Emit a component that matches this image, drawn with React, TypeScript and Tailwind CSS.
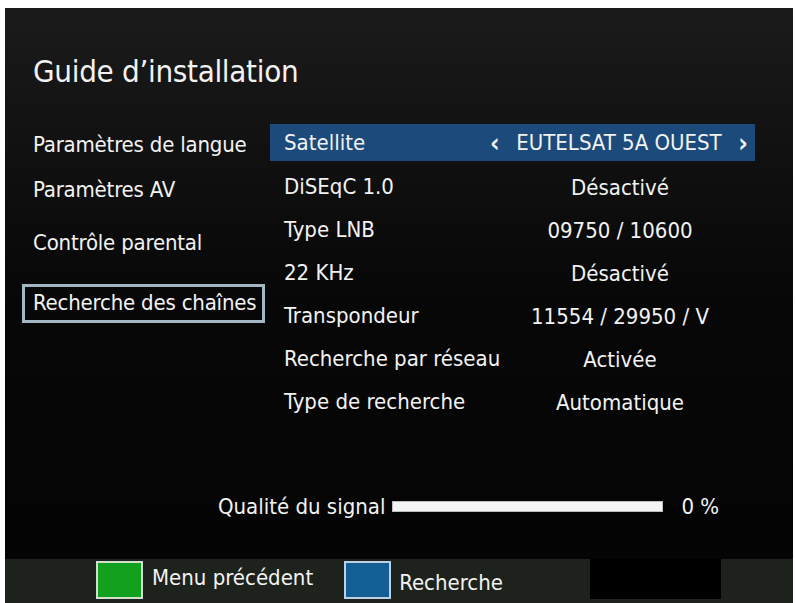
import React from 'react';

const FONT = { fontFamily: '"Liberation Sans Narrow", "DejaVu Sans Condensed", "Roboto", sans-serif' };

const menu = [
  { label: 'Paramètres de langue', cls: 'h-[37px] pt-[4px]' },
  { label: 'Paramètres AV', cls: 'mt-[8px] h-[40px]' },
  { label: 'Contrôle parental', cls: 'mt-[13px] h-[40px]' },
];

const rows = [
  { label: 'DiSEqC 1.0', value: 'Désactivé' },
  { label: 'Type LNB', value: '09750 / 10600' },
  { label: '22 KHz', value: 'Désactivé' },
  { label: 'Transpondeur', value: '11554 / 29950 / V' },
  { label: 'Recherche par réseau', value: 'Activée' },
  { label: 'Type de recherche', value: 'Automatique' },
];

const App: React.FC = () => {
  return (
    <div className="w-[795px] h-[603px] bg-white pt-[8px] pl-[5px] pr-[2px] overflow-hidden" style={FONT}>
      <div className="h-[595px] flex flex-col bg-gradient-to-b from-[#1b1b1b] via-[#070707] to-[#040404] text-[#f2f2f2]">
        {/* Title */}
        <div className="h-[117px] pt-[43px] pl-[28px]">
          <h1 className="text-[31px] leading-[40px] tracking-[-0.3px]">Guide d’installation</h1>
        </div>

        {/* Body */}
        <div className="flex h-[330px]">
          {/* Left menu */}
          <div className="w-[265px] pl-[17px] flex flex-col text-[22px] tracking-[-0.2px] whitespace-nowrap">
            {menu.map((m) => (
              <div key={m.label} className={`${m.cls} flex items-center pl-[11px]`}>
                {m.label}
              </div>
            ))}
            <div className="mt-[22px] h-[39px] w-[243px] border-[3px] border-[#a3b7c3] flex items-center pl-[8px] pb-[3px]">
              Recherche des chaînes
            </div>
          </div>

          {/* Settings */}
          <div className="w-[485px] flex flex-col text-[22px] whitespace-nowrap">
            <div className="h-[37px] bg-[#1b4a7b] flex items-center">
              <div className="w-[215px] pl-[14px]">Satellite</div>
              <div className="flex-1 flex items-center justify-between pl-[5px] pr-[7px]">
                <span className="text-[26px] leading-none font-bold">‹</span>
                <span>EUTELSAT 5A OUEST</span>
                <span className="text-[26px] leading-none font-bold">›</span>
              </div>
            </div>
            <div className="h-[5px]" />
            {rows.map((r) => (
              <div key={r.label} className="h-[43px] flex items-center">
                <div className="w-[215px] pl-[14px] pb-[2px]">{r.label}</div>
                <div className="flex-1 text-center">{r.value}</div>
              </div>
            ))}
          </div>
        </div>

        {/* Signal quality */}
        <div className="h-[110px] flex items-center pl-[213px] text-[22px] pt-[3px]">
          <span>Qualité du signal</span>
          <div className="ml-[7px] w-[271px] h-[11px] bg-[#f4f4f4] border border-[#bdbdbd]" />
          <span className="ml-[18px]">0 %</span>
        </div>

        {/* Bottom bar */}
        <div className="flex-1 bg-[#1d221d] flex items-start text-[22px] pt-[2px]">
          <div className="ml-[91px] w-[47px] h-[38px] bg-[#12a11f] border-2 border-[#cfe0cf]" />
          <span className="ml-[9px] leading-[34px]">Menu précédent</span>
          <div className="ml-[31px] w-[47px] h-[38px] bg-[#145e96] border-2 border-[#bcd2e2]" />
          <span className="ml-[8px] leading-[40px] mt-[2px]">Recherche</span>
          <div className="ml-[87px] w-[131px] h-[40px] -mt-[2px] bg-black" />
        </div>
      </div>
    </div>
  );
};

export default App;
